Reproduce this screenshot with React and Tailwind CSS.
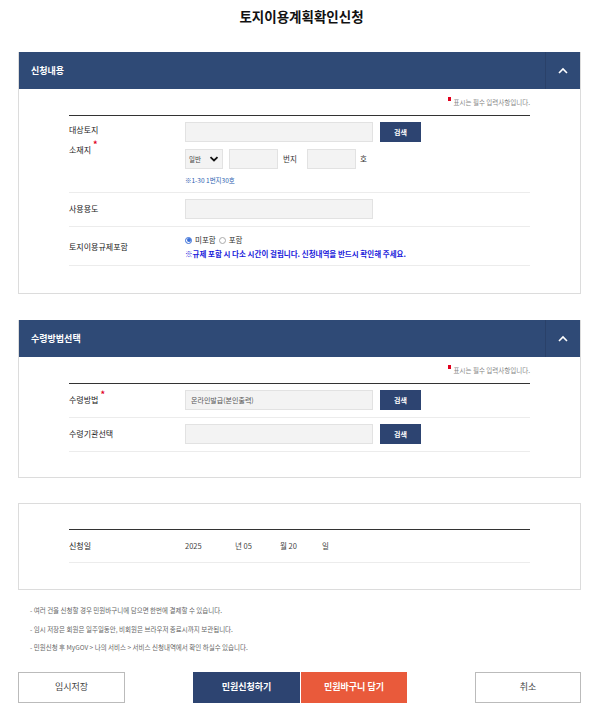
import React from 'react';

const FONT = { fontFamily: '"Noto Sans CJK KR", "Noto Sans", sans-serif' };

const Req = () => (
  <span className="ml-[2px] relative -top-[5px] text-[9px] leading-none font-bold text-[#e1001e]">*</span>
);

const Field = ({ w = 'w-[188px]', value = '' }) => (
  <input
    readOnly
    value={value}
    className={`block ${w} h-[20px] bg-[#f3f3f3] border border-[#e2e2e2] px-[5px] text-[7px] text-[#555] outline-none`}
  />
);

const SearchBtn = () => (
  <button className="w-[41px] h-[20px] bg-[#2d4471] text-white text-[7px] font-bold">검색</button>
);

const Chevron = () => (
  <svg width="10" height="8" viewBox="0 0 10 8">
    <path d="M1.5 2.2l3.5 3.3 3.5-3.3" fill="none" stroke="#111" strokeWidth="1.8" />
  </svg>
);

const PanelHeader = ({ title }) => (
  <div className="flex h-[37px] bg-[#2f4a76]">
    <div className="flex-1 flex items-center pl-[12px] text-white text-[9px] font-bold">{title}</div>
    <div className="w-[35px] flex items-center justify-center border-l border-[#2a4169]">
      <svg width="12" height="8" viewBox="0 0 12 8">
        <path d="M2 6l4-4 4 4" fill="none" stroke="#fff" strokeWidth="1.6" />
      </svg>
    </div>
  </div>
);

const RequiredNote = () => (
  <div className="flex justify-end items-start h-[18px] pt-[2px] text-[6.5px] leading-none text-[#888]">
    <span className="w-[3px] h-[4px] bg-[#e1001e] mr-[3px] -mt-[2px]" />
    <span>표시는 필수 입력사항입니다.</span>
  </div>
);

const Row = ({ label, children, labelTop = false, className = '' }) => (
  <div className={`flex border-b border-[#ececec] ${labelTop ? 'items-start' : 'items-center'} ${className}`}>
    <div className="w-[116px] text-[8px] text-[#222]">{label}</div>
    <div className="flex-1 text-[8px] leading-[12px]">{children}</div>
  </div>
);

export default function App() {
  return (
    <div style={FONT} className="w-[603px] bg-white pb-[20px]">
      <h1 className="pt-[6px] h-[52px] text-center text-[13.5px] font-bold text-[#111]">토지이용계획확인신청</h1>

      {/* 신청내용 */}
      <section className="ml-[18px] w-[563px] border border-[#dcdcdc] border-t-0">
        <PanelHeader title="신청내용" />
        <div className="px-[50px] pt-[8px] pb-[27px]">
          <RequiredNote />
          <div className="border-t-[1.5px] border-[#333]">
            <Row
              labelTop
              className="pt-[6px] pb-[7px]"
              label={
                <div>
                  <div className="leading-[16px]">대상토지</div>
                  <div className="mt-[4px] leading-[16px]">소재지<Req /></div>
                </div>
              }
            >
              <div className="flex gap-[7px]">
                <Field />
                <SearchBtn />
              </div>
              <div className="flex items-center mt-[7px]">
                <div className="w-[38px] h-[20px] bg-[#f3f3f3] border border-[#e2e2e2] flex items-center justify-between px-[3px] text-[6.5px] text-[#444]">
                  일반 <Chevron />
                </div>
                <Field w="w-[49px] ml-[6px]" />
                <span className="ml-[5px] w-[24px] text-[7.5px] text-[#333]">번지</span>
                <Field w="w-[49px]" />
                <span className="ml-[4px] text-[7.5px] text-[#333]">호</span>
              </div>
              <div className="mt-[6px] text-[6.5px] leading-[10px] text-[#2a5db0]">※1-30 1번지30호</div>
            </Row>
          </div>
          <Row label="사용용도" className="pt-[6px] pb-[7px]">
            <Field />
          </Row>
          <Row label="토지이용규제포함" className="pt-[7px] pb-[5px]">
            <div className="flex items-center text-[7.5px] text-[#333] leading-[12px]">
              <span className="w-[7px] h-[7px] rounded-full border border-[#3a6fd8] flex items-center justify-center mr-[3px]">
                <span className="w-[4px] h-[4px] rounded-full bg-[#3a6fd8]" />
              </span>
              미포함
              <span className="w-[7px] h-[7px] rounded-full border border-[#aaa] mx-[3px]" />
              포함
            </div>
            <div className="mt-[2px] text-[7.5px] leading-[12px] font-bold text-[#1a1adb]">
              ※규제 포함 시 다소 시간이 걸립니다. 신청내역을 반드시 확인해 주세요.
            </div>
          </Row>
        </div>
      </section>

      {/* 수령방법선택 */}
      <section className="ml-[18px] w-[563px] mt-[26px] border border-[#dcdcdc] border-t-0">
        <PanelHeader title="수령방법선택" />
        <div className="px-[50px] pt-[8px] pb-[25px]">
          <RequiredNote />
          <div className="border-t-[1.5px] border-[#333]">
            <Row label={<span>수령방법<Req /></span>} className="pt-[6px] pb-[7px]">
              <div className="flex gap-[7px]">
                <Field value="온라인발급(본인출력)" />
                <SearchBtn />
              </div>
            </Row>
          </div>
          <Row label="수령기관선택" className="pt-[6px] pb-[7px]">
            <div className="flex gap-[7px]">
              <Field />
              <SearchBtn />
            </div>
          </Row>
        </div>
      </section>

      {/* 신청일 */}
      <section className="ml-[18px] w-[563px] mt-[25px] border border-[#dcdcdc] px-[50px] pt-[25px] pb-[26px]">
        <div className="border-t-[1.5px] border-[#333]">
          <Row label="신청일" className="h-[33px]">
            <div className="flex items-center text-[7.5px] text-[#444]">
              <span className="w-[50px]">2025</span>
              <span className="w-[45px]">년 05</span>
              <span className="w-[42px]">월 20</span>
              <span>일</span>
            </div>
          </Row>
        </div>
      </section>

      {/* 안내 */}
      <ul className="mt-[11px] pl-[30px] text-[6.5px] leading-[18.5px] text-[#666]">
        <li>- 여러 건을 신청할 경우 민원바구니에 담으면 한번에 결제할 수 있습니다.</li>
        <li>- 임시 저장은 회원은 일주일동안, 비회원은 브라우저 종료시까지 보관됩니다.</li>
        <li>- 민원신청 후 MyGOV &gt; 나의 서비스 &gt; 서비스 신청내역에서 확인 하실수 있습니다.</li>
      </ul>

      <div className="ml-[18px] w-[563px] mt-[15px] flex items-center justify-between">
        <button className="w-[107px] h-[31px] border border-[#bbb] bg-white text-[9px] text-[#444]">임시저장</button>
        <div className="flex gap-[1px]">
          <button className="w-[107px] h-[31px] bg-[#2d4471] text-white text-[9px] font-bold">민원신청하기</button>
          <button className="w-[106px] h-[31px] bg-[#e95a3b] text-white text-[9px] font-bold">민원바구니 담기</button>
        </div>
        <button className="w-[106px] h-[31px] border border-[#bbb] bg-white text-[9px] text-[#444]">취소</button>
      </div>
    </div>
  );
}
